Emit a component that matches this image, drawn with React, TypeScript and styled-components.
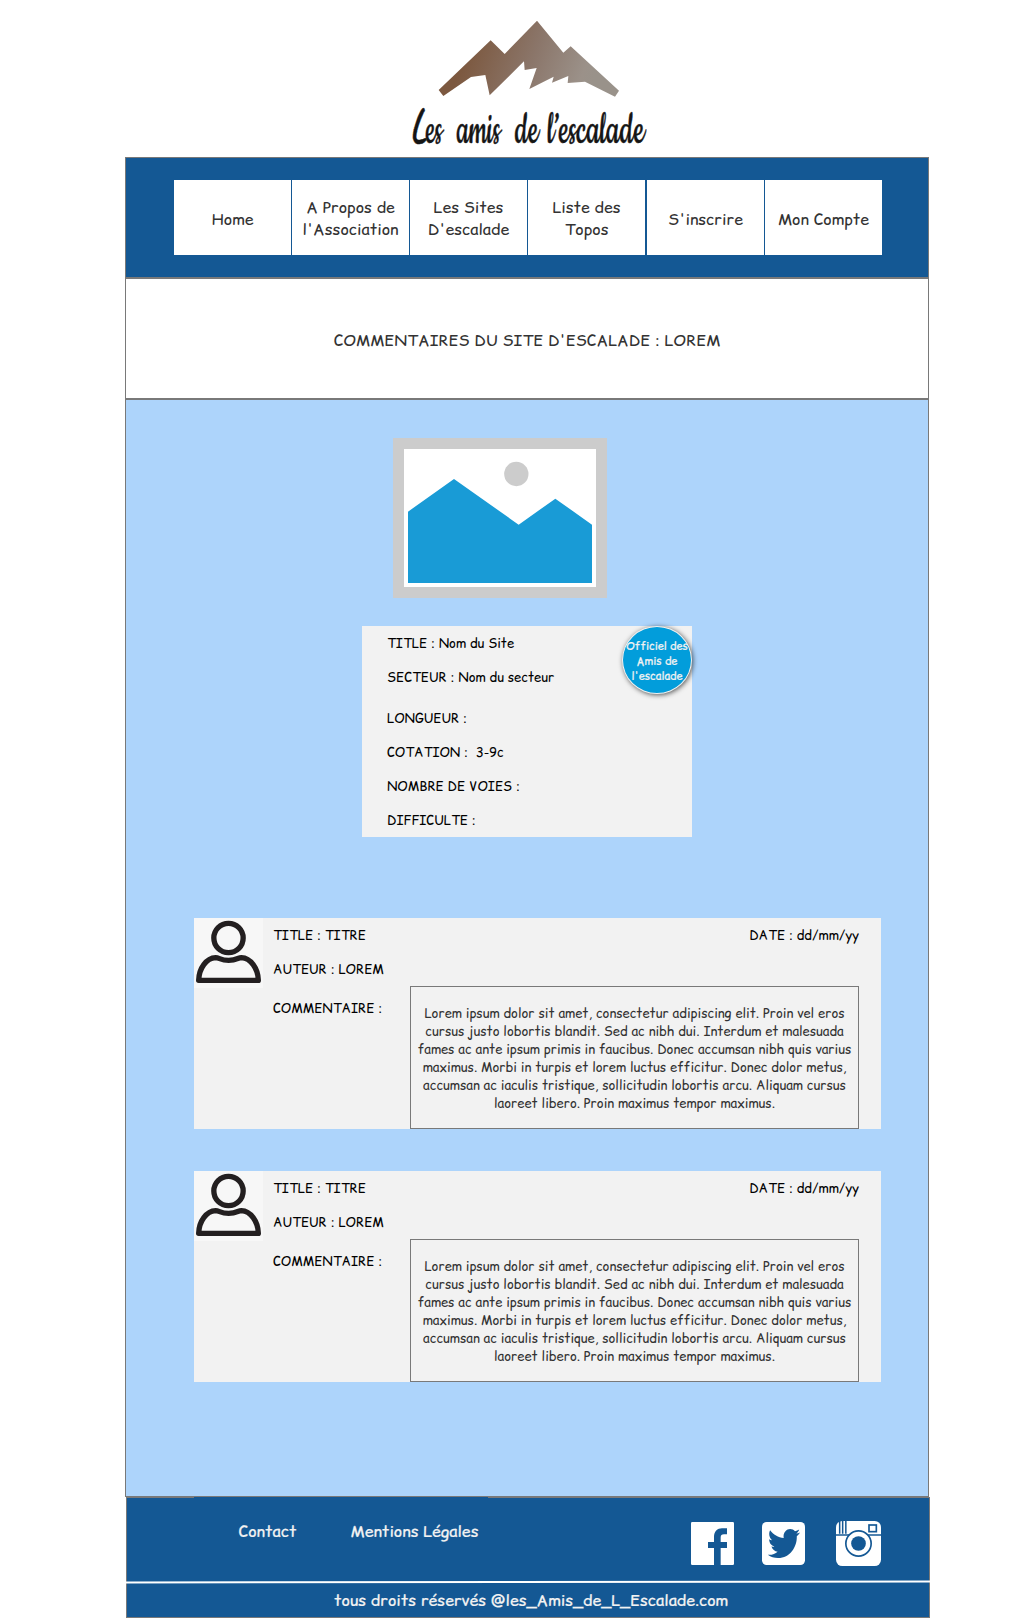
import React from "react";
import styled, { createGlobalStyle } from "styled-components";

const comic = `"Comic Relief", "Comic Neue", "Noto Sans", sans-serif`;
const blue = "#145894";
const line = "#797979";

const GlobalStyle = createGlobalStyle`
  * { box-sizing: border-box; }
  body { margin: 0; background: #fff; font-family: ${comic}; color: #333; }
`;

const Page = styled.div`
  width: 1024px;
  height: 1618px;
  overflow: hidden;
`;

const LogoBar = styled.header`
  height: 157px;
  padding-left: 390px;
  svg { display: block; overflow: visible; }
`;

const Column = styled.div`
  width: 804px;
  margin-left: 125px;
`;

const NavBar = styled.nav`
  height: 121px;
  padding: 22px 46px 0 48px;
  display: flex;
  gap: 1px;
  background: ${blue};
  border: 1px solid ${line};
`;

const NavItem = styled.a<{ $push?: boolean; $single?: boolean }>`
  width: 117px;
  height: 75px;
  margin-left: ${p => (p.$push ? 1 : 0)}px;
  padding-top: ${p => (p.$single ? 2 : 0)}px;
  display: flex;
  align-items: center;
  justify-content: center;
  text-align: center;
  white-space: nowrap;
  background: #fff;
  font-size: 16px;
  line-height: 22px;
`;

const Heading = styled.h1`
  height: 121px;
  margin: 0;
  padding-top: 2px;
  display: flex;
  align-items: center;
  justify-content: center;
  border: 1px solid ${line};
  font-size: 16px;
  font-weight: 400;
  white-space: nowrap;
`;

const Content = styled.main`
  height: 1098px;
  padding: 38px 47px 0 68px;
  border: 1px solid ${line};
  background: #add4fb;
`;

const Photo = styled.svg`
  display: block;
  width: 214px;
  height: 160px;
  margin-left: 199px;
`;

const SiteCard = styled.section`
  position: relative;
  width: 330px;
  height: 211px;
  margin: 28px 0 81px 168px;
  padding-left: 25px;
  background: #f2f2f2;
`;

const Field = styled.div<{ $gap?: number }>`
  height: 34px;
  margin-top: ${p => p.$gap ?? 0}px;
  font-size: 13px;
  line-height: 34px;
  color: #000;
  white-space: pre;
`;

const Badge = styled.div`
  position: absolute;
  top: 0;
  right: 0;
  width: 70px;
  height: 68px;
  padding-top: 2px;
  display: flex;
  align-items: center;
  justify-content: center;
  border: 1px solid #f2f2f2;
  border-radius: 50%;
  background: #029ddb;
  box-shadow: 1px 1px 5px rgba(0, 0, 0, 0.65);
  color: #f2f2f2;
  font-size: 11px;
  line-height: 15px;
  text-align: center;
  white-space: nowrap;
  -webkit-text-stroke: 0.2px #f2f2f2;
`;

const CommentCard = styled.article`
  width: 687px;
  height: 211px;
  margin-bottom: 42px;
  padding-right: 22px;
  display: flex;
  background: #f2f2f2;
`;

const Avatar = styled.svg`
  flex: none;
  width: 69px;
  height: 70px;
  background: #f7f7f7;
`;

const CommentBody = styled.div`
  flex: 1;
  padding-left: 10px;
`;

const Split = styled.div`
  display: flex;
  justify-content: space-between;
`;

const CommentText = styled.p`
  width: 449px;
  height: 143px;
  margin: 0;
  padding-top: 1px;
  display: flex;
  align-items: center;
  justify-content: center;
  border: 1px solid ${line};
  font-size: 13px;
  line-height: 18.1px;
  text-align: center;
  white-space: nowrap;
`;

const Footer = styled.footer`
  width: 804px;
  height: 121px;
  margin-left: 1px;
  border: 1px solid ${line};
  background: ${blue};
  color: #f2f2f2;
  font-size: 16px;
  -webkit-text-stroke: 0.2px #f2f2f2;
`;

const FooterTop = styled.div`
  height: 82px;
  display: flex;
  justify-content: space-between;
`;

const FooterMenu = styled.div`
  width: 294px;
  height: 67px;
  margin: -1px 0 0 67px;
  display: grid;
  grid-template-columns: 1fr 1fr;
  align-items: center;
  justify-items: center;
  background: ${blue};
  white-space: nowrap;
`;

const Social = styled.div`
  padding: 9px 48px 0 0;
  display: flex;
  align-items: center;
  gap: 28px;
`;

const SocialIcon = styled.svg<{ $size: number; $push?: number }>`
  width: ${p => p.$size}px;
  height: ${p => p.$size}px;
  margin-left: ${p => p.$push ?? 0}px;
`;

const Divider = styled.svg`
  display: block;
  width: 804px;
  height: 4px;
  margin-left: -1px;
  overflow: visible;
`;

const Rights = styled.div`
  height: 33px;
  padding: 0 0 2px 6px;
  display: flex;
  align-items: center;
  justify-content: center;
  white-space: nowrap;
`;

const script = "Cookie, 'Dancing Script', cursive";

const words: [string, number, number][] = [
  ["amis", 200, 131],
  ["de", 375, 70],
  ["l’escalade", 473, 290],
];

const Logo = () => (
  <svg width="280" height="157" viewBox="0 0 840 471">
    <defs>
      <linearGradient id="rock" gradientUnits="userSpaceOnUse" x1="240" y1="130" x2="600" y2="270">
        <stop offset="0" stopColor="#7c583f" />
        <stop offset="0.5" stopColor="#8b766a" />
        <stop offset="0.9" stopColor="#9b9189" />
        <stop offset="1" stopColor="#99928a" />
      </linearGradient>
    </defs>
    <polygon
      fill="url(#rock)"
      points="146,270 302,121 344,162 441,62 520,158 542,139 687,272 675,290 585,245 533,249 535,228 486,248 491,230 418,267 440,204 404,210 402,184 299,286 286,225 243,231 160,288"
    />
    <text y="428" fontFamily={script} fontSize="158" fill="#151515" stroke="#151515" strokeWidth="1.5">
      <tspan x="59" y="424" textLength="46" lengthAdjust="spacingAndGlyphs" fontFamily="Caveat, cursive" fontWeight="700" fontSize="142">
        L
      </tspan>
      <tspan x="107" y="428" textLength="50" lengthAdjust="spacingAndGlyphs">
        es
      </tspan>
      {words.map(([word, x, width]) => (
        <tspan key={word} x={x} textLength={width} lengthAdjust="spacingAndGlyphs">
          {word}
        </tspan>
      ))}
    </text>
  </svg>
);

const Landscape = () => (
  <Photo viewBox="39 39 642 480">
    <rect x="39" y="39" width="642" height="480" fill="#ccc" />
    <rect x="72" y="72" width="576" height="414" fill="#fff" />
    <circle cx="409" cy="147" r="36.5" fill="#ccc" />
    <polygon points="84,260 222,162 416,299 526,221 636,299 636,474 84,474" fill="#199bd6" />
  </Photo>
);

const Person = () => (
  <Avatar viewBox="0 0 207 210" fill="none" stroke="#231f20" strokeWidth="16" strokeLinejoin="round">
    <circle cx="103.5" cy="60" r="44" />
    <path d="M14 187C15 151 37 120 65 119C76 119 80 127 104 127C128 127 132 119 142 119C170 120 192 151 193 187Z" />
  </Avatar>
);

const Comment = () => (
  <CommentCard>
    <Person />
    <CommentBody>
      <Split>
        <Field>TITLE : TITRE</Field>
        <Field>DATE : dd/mm/yy</Field>
      </Split>
      <Field>AUTEUR : LOREM</Field>
      <Split>
        <Field $gap={5}>COMMENTAIRE :</Field>
        <CommentText>
          <span>
            Lorem ipsum dolor sit amet, consectetur adipiscing elit. Proin vel eros
            <br />
            cursus justo lobortis blandit. Sed ac nibh dui. Interdum et malesuada
            <br />
            fames ac ante ipsum primis in faucibus. Donec accumsan nibh quis varius
            <br />
            maximus. Morbi in turpis et lorem luctus efficitur. Donec dolor metus,
            <br />
            accumsan ac iaculis tristique, sollicitudin lobortis arcu. Aliquam cursus
            <br />
            laoreet libero. Proin maximus tempor maximus.
          </span>
        </CommentText>
      </Split>
    </CommentBody>
  </CommentCard>
);

export default function App() {
  return (
    <Page>
      <GlobalStyle />
      <LogoBar>
        <Logo />
      </LogoBar>
      <Column>
        <NavBar>
          <NavItem $single>Home</NavItem>
          <NavItem>A Propos de<br />l'Association</NavItem>
          <NavItem>Les Sites<br />D'escalade</NavItem>
          <NavItem>Liste des<br />Topos</NavItem>
          <NavItem $single $push>S'inscrire</NavItem>
          <NavItem $single>Mon Compte</NavItem>
        </NavBar>
        <Heading>COMMENTAIRES DU SITE D'ESCALADE : LOREM</Heading>
        <Content>
          <Landscape />
          <SiteCard>
            <Field>TITLE : Nom du Site</Field>
            <Field>SECTEUR : Nom du secteur</Field>
            <Field $gap={7}>LONGUEUR :</Field>
            <Field>{"COTATION :  3-9c"}</Field>
            <Field>NOMBRE DE VOIES :</Field>
            <Field>DIFFICULTE :</Field>
            <Badge>Officiel des<br />Amis de<br />l'escalade</Badge>
          </SiteCard>
          <Comment />
          <Comment />
        </Content>
        <Footer>
          <FooterTop>
            <FooterMenu>
              <span>Contact</span>
              <span>Mentions Légales</span>
            </FooterMenu>
            <Social>
              <SocialIcon $size={43} viewBox="0 0 129 129">
                <rect width="129" height="129" rx="4" fill="#fff" />
                <path fill={blue} d="M69 129V78H51V60H69V45C69 28 79 19 93 19H108V37H99C92 37 89 40 89 47V60H108V78H89V129Z" />
              </SocialIcon>
              <SocialIcon $size={43} viewBox="0 0 129 129">
                <rect width="129" height="129" rx="14" fill="#fff" />
                <path
                  fill={blue}
                  transform="translate(17.5 11) scale(0.189 0.209)"
                  d="M459.37 151.716c.325 4.548.325 9.097.325 13.645 0 138.72-105.583 298.558-298.558 298.558-59.452 0-114.68-17.219-161.137-47.106 8.447.974 16.568 1.299 25.34 1.299 49.055 0 94.213-16.568 130.274-44.832-46.132-.975-84.792-31.188-98.112-72.772 6.498.974 12.995 1.624 19.818 1.624 9.421 0 18.843-1.3 27.614-3.573-48.081-9.747-84.143-51.98-84.143-102.985v-1.299c13.969 7.797 30.214 12.67 47.431 13.319-28.264-18.843-46.781-51.005-46.781-87.391 0-19.492 5.197-37.36 14.294-52.954 51.655 63.675 129.3 105.258 216.365 109.807-1.624-7.797-2.599-15.918-2.599-24.04 0-57.828 46.782-104.934 104.934-104.934 30.213 0 57.502 12.67 76.67 33.137 23.715-4.548 46.456-13.32 66.599-25.34-7.798 24.366-24.366 44.833-46.132 57.827 21.117-2.273 41.584-8.122 60.426-16.243-14.292 20.791-32.161 39.308-52.628 54.253z"
                />
              </SocialIcon>
              <SocialIcon $size={45} $push={3} viewBox="0 0 135 135">
                <rect width="135" height="135" rx="19" fill="#fff" />
                <path stroke={blue} strokeWidth="4.5" d="M11 0V38M20 0V38M29.5 0V38" />
                <path stroke={blue} strokeWidth="5" d="M0 42H135" />
                <circle cx="67.5" cy="67.5" r="38" fill="#fff" stroke={blue} strokeWidth="5" />
                <circle cx="67.5" cy="67.5" r="22" fill={blue} />
                <rect x="99" y="12" width="22" height="20" fill="none" stroke={blue} strokeWidth="5" />
              </SocialIcon>
            </Social>
          </FooterTop>
          <Divider viewBox="0 0 804 4">
            <line x1="0" y1="2.5" x2="804" y2="1.5" stroke="#fff" strokeWidth="2" />
          </Divider>
          <Rights>tous droits réservés @les_Amis_de_L_Escalade.com</Rights>
        </Footer>
      </Column>
    </Page>
  );
}
